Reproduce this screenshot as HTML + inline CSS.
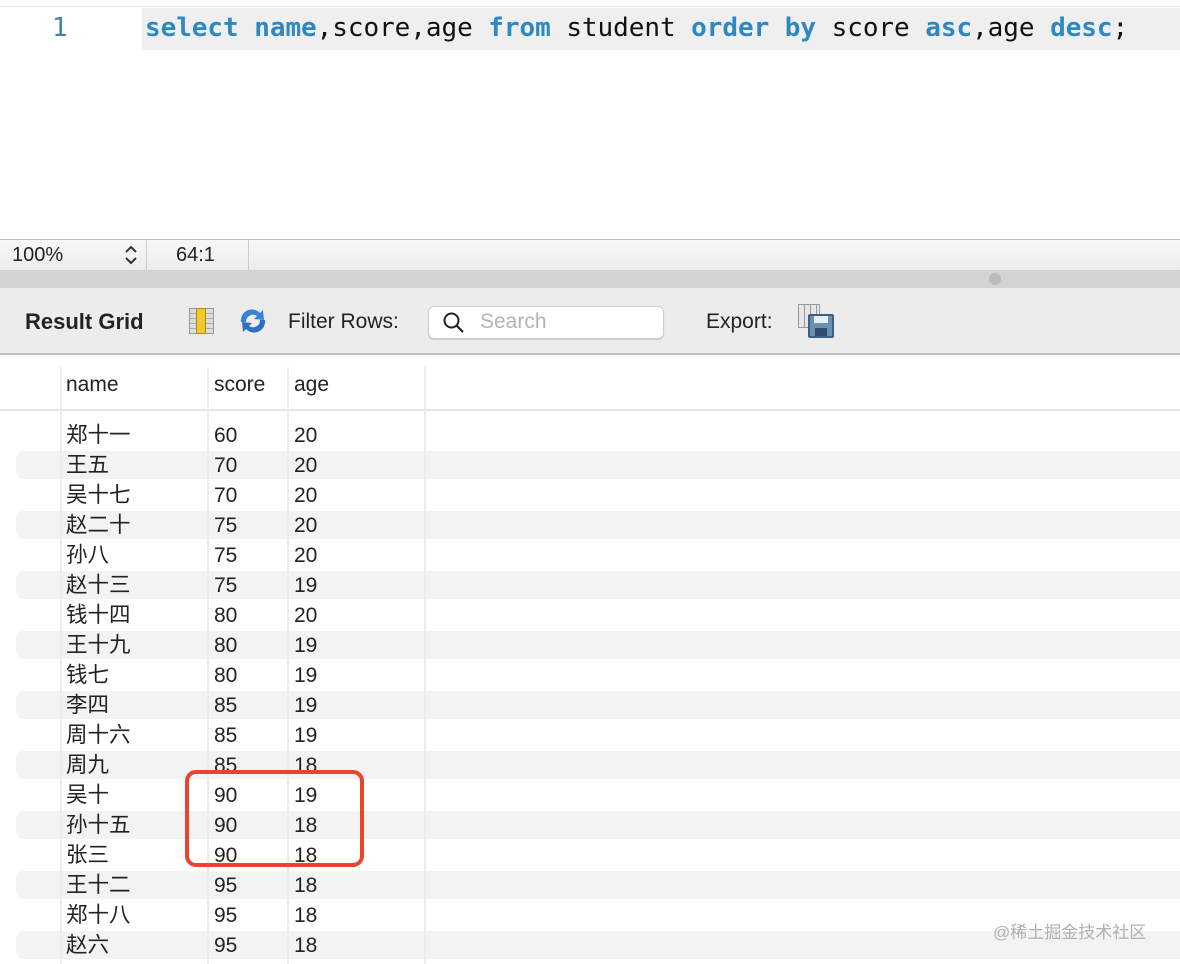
<!DOCTYPE html>
<html><head><meta charset="utf-8"><style>
*{margin:0;padding:0;box-sizing:border-box}
body{width:1180px;height:964px;overflow:hidden;background:#fff;font-family:"Liberation Sans","Noto Sans CJK SC",sans-serif;position:relative}
.abs{position:absolute}
.code{font-family:"DejaVu Sans Mono","Liberation Mono",monospace;font-size:26px}
.kw{color:#2e88c2;font-weight:bold}
.row{position:absolute;left:0;width:1180px;height:30px;font-size:21px;color:#222}
.row.s .bg{position:absolute;left:28px;right:0;top:1px;bottom:1px;background:#f3f3f3}
.row.s .cap{position:absolute;left:16px;width:16px;top:1px;bottom:1px;background:#f3f3f3;border-radius:8px 0 0 8px}
.row span{position:absolute;top:5px;line-height:22px}
.row span:first-of-type{top:4px;font-size:21.5px}
.vl{position:absolute;width:2px;background:#ececec}
</style></head><body>
<div class="abs" style="left:0;top:6px;width:1180px;height:1px;background:#e6e6e6"></div>
<div class="abs" style="left:142px;top:8px;width:1038px;height:42px;background:#efefef"></div>
<div class="abs code" style="left:52px;top:13px;color:#3d86a8">1</div>
<div class="abs code" style="left:145px;top:13px;color:#111;white-space:pre;letter-spacing:-0.05px"><span class="kw">select</span> <span class="kw">name</span>,score,age <span class="kw">from</span> student <span class="kw">order</span> <span class="kw">by</span> score <span class="kw">asc</span>,age <span class="kw">desc</span>;</div>

<div class="abs" style="left:0;top:239px;width:1180px;height:1px;background:#bdbdbd"></div>
<div class="abs" style="left:0;top:240px;width:1180px;height:30px;background:linear-gradient(#f8f8f8,#ececec)"></div>
<div class="abs" style="left:12px;top:244px;font-size:20px;color:#222">100%</div>
<svg class="abs" style="left:123px;top:244px" width="16" height="22" viewBox="0 0 16 22"><path d="M3 8 L8 3 L13 8 M3 14 L8 19 L13 14" fill="none" stroke="#333" stroke-width="2"/></svg>
<div class="abs" style="left:146px;top:240px;width:1px;height:30px;background:#ccc"></div>
<div class="abs" style="left:176px;top:244px;font-size:20px;color:#222">64:1</div>
<div class="abs" style="left:248px;top:240px;width:1px;height:30px;background:#ccc"></div>
<div class="abs" style="left:0;top:270px;width:1180px;height:18px;background:#d3d3d3"></div>
<div class="abs" style="left:989px;top:273px;width:12px;height:12px;border-radius:50%;background:#bcbcbc"></div>
<div class="abs" style="left:0;top:288px;width:1180px;height:66px;background:#ececec"></div>
<div class="abs" style="left:0;top:353px;width:1180px;height:2px;background:#bdbdbd"></div>
<div class="abs" style="left:25px;top:309px;font-size:22px;font-weight:bold;color:#222">Result Grid</div>
<div class="abs" style="left:189px;top:308px;width:25px;height:26px;background:repeating-linear-gradient(#ddd 0 4px,#aaa 4px 5px);border:1px solid #999"></div>
<div class="abs" style="left:196px;top:308px;width:10px;height:26px;background:#f2c830;border:1px solid #b08a10"></div>
<svg class="abs" style="left:236px;top:306px" width="34" height="30" viewBox="0 0 34 30"><path d="M5 16 A11 11 0 0 1 24 7 L27 4 L28 14 L18 13 L21 10 A7 7 0 0 0 10 16 Z" fill="#3a82d8"/><path d="M29 14 A11 11 0 0 1 10 23 L7 26 L6 16 L16 17 L13 20 A7 7 0 0 0 24 14 Z" fill="#2f6fc7"/></svg>
<div class="abs" style="left:288px;top:310px;font-size:21px;color:#222">Filter Rows:</div>
<div class="abs" style="left:428px;top:306px;width:236px;height:33px;background:#fff;border:1px solid #cfcfcf;border-radius:6px;box-shadow:0 1px 1px #ccc"></div>
<svg class="abs" style="left:442px;top:311px" width="24" height="24" viewBox="0 0 24 24"><circle cx="9.5" cy="9.5" r="7" fill="none" stroke="#222" stroke-width="2"/><line x1="14.5" y1="14.5" x2="21" y2="21" stroke="#222" stroke-width="2.2"/></svg>
<div class="abs" style="left:480px;top:310px;font-size:21px;color:#b4b4b4">Search</div>
<div class="abs" style="left:706px;top:310px;font-size:21px;color:#222">Export:</div>
<div class="abs" style="left:798px;top:304px;width:22px;height:24px;background:repeating-linear-gradient(90deg,#e6e6e6 0 5px,#999 5px 6px),#ddd;border:1px solid #999"></div>
<div class="abs" style="left:808px;top:314px;width:26px;height:24px;background:#6b8fb3;border:2px solid #3e5f82;border-radius:2px"></div>
<div class="abs" style="left:814px;top:316px;width:14px;height:7px;background:#e9eef3"></div>
<div class="abs" style="left:815px;top:328px;width:12px;height:8px;background:#2f4c6a"></div>

<div class="abs" style="left:66px;top:373px;font-size:21px;color:#222">name</div>
<div class="abs" style="left:214px;top:373px;font-size:21px;color:#222">score</div>
<div class="abs" style="left:294px;top:373px;font-size:21px;color:#222">age</div>
<div class="abs" style="left:0;top:409px;width:1180px;height:2px;background:#e6e6e6"></div>

<div class="row" style="top:420px"><span style="left:66px">郑十一</span><span style="left:214px">60</span><span style="left:294px">20</span></div>
<div class="row s" style="top:450px"><div class="cap"></div><div class="bg"></div><span style="left:66px">王五</span><span style="left:214px">70</span><span style="left:294px">20</span></div>
<div class="row" style="top:480px"><span style="left:66px">吴十七</span><span style="left:214px">70</span><span style="left:294px">20</span></div>
<div class="row s" style="top:510px"><div class="cap"></div><div class="bg"></div><span style="left:66px">赵二十</span><span style="left:214px">75</span><span style="left:294px">20</span></div>
<div class="row" style="top:540px"><span style="left:66px">孙八</span><span style="left:214px">75</span><span style="left:294px">20</span></div>
<div class="row s" style="top:570px"><div class="cap"></div><div class="bg"></div><span style="left:66px">赵十三</span><span style="left:214px">75</span><span style="left:294px">19</span></div>
<div class="row" style="top:600px"><span style="left:66px">钱十四</span><span style="left:214px">80</span><span style="left:294px">20</span></div>
<div class="row s" style="top:630px"><div class="cap"></div><div class="bg"></div><span style="left:66px">王十九</span><span style="left:214px">80</span><span style="left:294px">19</span></div>
<div class="row" style="top:660px"><span style="left:66px">钱七</span><span style="left:214px">80</span><span style="left:294px">19</span></div>
<div class="row s" style="top:690px"><div class="cap"></div><div class="bg"></div><span style="left:66px">李四</span><span style="left:214px">85</span><span style="left:294px">19</span></div>
<div class="row" style="top:720px"><span style="left:66px">周十六</span><span style="left:214px">85</span><span style="left:294px">19</span></div>
<div class="row s" style="top:750px"><div class="cap"></div><div class="bg"></div><span style="left:66px">周九</span><span style="left:214px">85</span><span style="left:294px">18</span></div>
<div class="row" style="top:780px"><span style="left:66px">吴十</span><span style="left:214px">90</span><span style="left:294px">19</span></div>
<div class="row s" style="top:810px"><div class="cap"></div><div class="bg"></div><span style="left:66px">孙十五</span><span style="left:214px">90</span><span style="left:294px">18</span></div>
<div class="row" style="top:840px"><span style="left:66px">张三</span><span style="left:214px">90</span><span style="left:294px">18</span></div>
<div class="row s" style="top:870px"><div class="cap"></div><div class="bg"></div><span style="left:66px">王十二</span><span style="left:214px">95</span><span style="left:294px">18</span></div>
<div class="row" style="top:900px"><span style="left:66px">郑十八</span><span style="left:214px">95</span><span style="left:294px">18</span></div>
<div class="row s" style="top:930px"><div class="cap"></div><div class="bg"></div><span style="left:66px">赵六</span><span style="left:214px">95</span><span style="left:294px">18</span></div>

<div class="vl" style="left:60px;top:367px;height:597px"></div>
<div class="vl" style="left:207px;top:367px;height:597px"></div>
<div class="vl" style="left:287px;top:367px;height:597px"></div>
<div class="vl" style="left:424px;top:367px;height:597px"></div>

<div class="abs" style="left:185px;top:770px;width:179px;height:97px;border:4px solid #e8452c;border-radius:11px"></div>
<div class="abs" style="left:993px;top:918px;font-size:17px;color:#b0b0b0">@稀土掘金技术社区</div>
</body></html>
